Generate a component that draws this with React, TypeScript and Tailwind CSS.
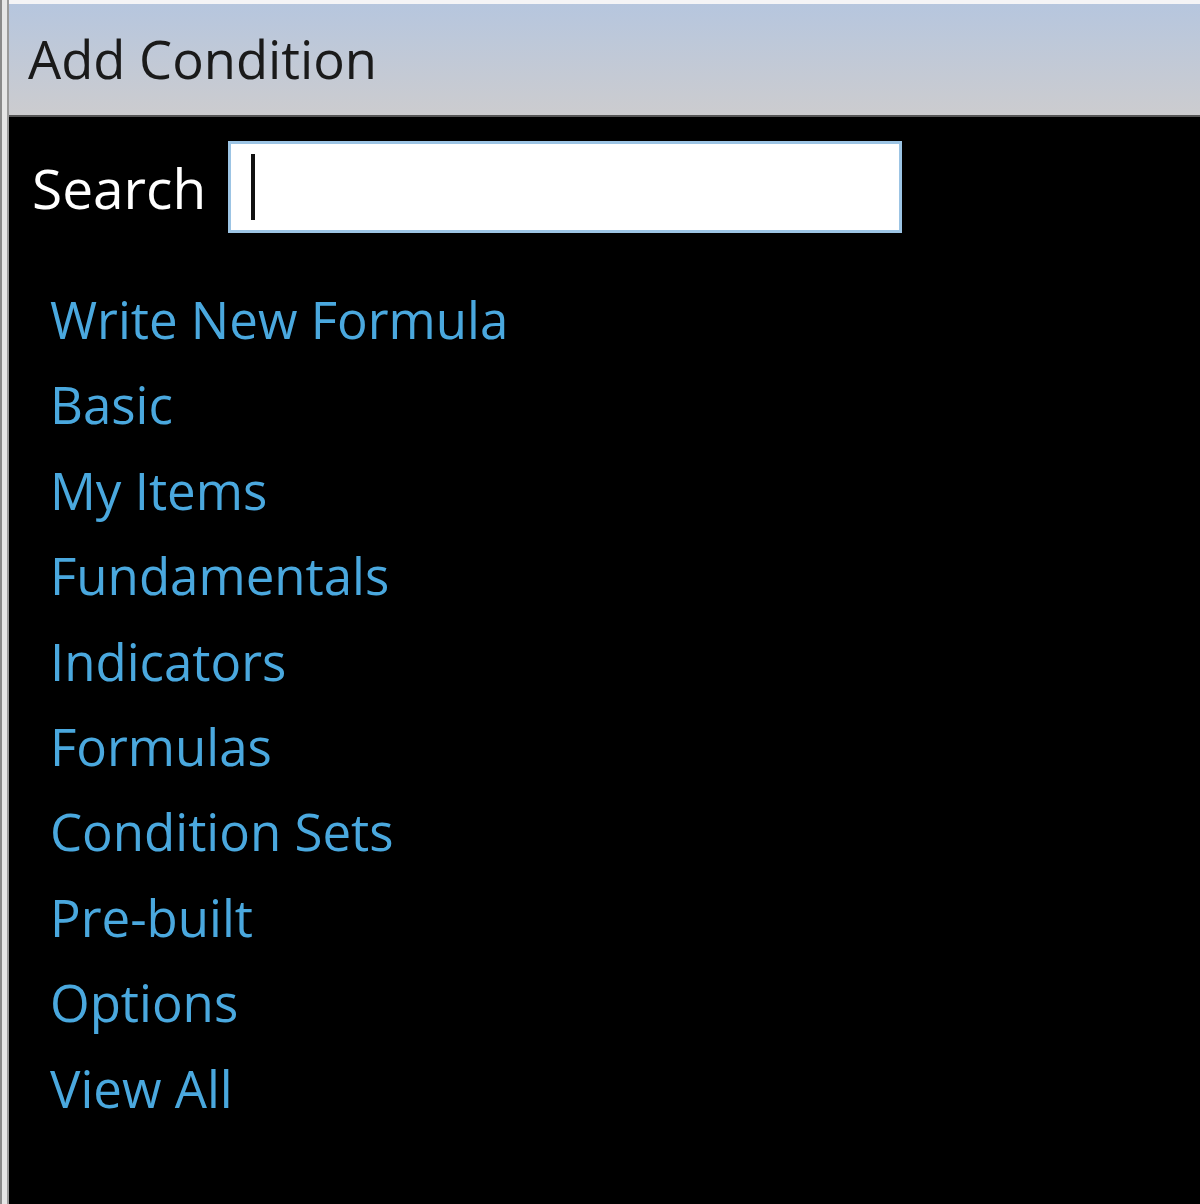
import React from "react";

const items = [
  "Write New Formula",
  "Basic",
  "My Items",
  "Fundamentals",
  "Indicators",
  "Formulas",
  "Condition Sets",
  "Pre-built",
  "Options",
  "View All",
];

export default function App() {
  return (
    <div className="flex h-[1204px] w-[1200px] overflow-hidden bg-black font-['Open_Sans',sans-serif]">
      <div className="flex w-[9px] shrink-0">
        <div className="w-[2px] bg-[#8a8a8a]" />
        <div className="w-[5px] bg-[#e6e6e6]" />
        <div className="w-[2px] bg-[#9a9a9a]" />
      </div>
      <div className="flex flex-1 flex-col">
        <div className="h-[4px] bg-[#f4f4f6]" />
        <div className="flex h-[111px] items-center bg-gradient-to-b from-[#b6c6de] to-[#cccccf] pl-[19px]">
          <span className="text-[52.5px] leading-none text-[#1a1a1a]">Add Condition</span>
        </div>
        <div className="h-[2px] bg-[#555]" />
        <div className="flex items-center pl-[23px] pt-[24px]">
          <span className="text-[55px] leading-none text-white">Search</span>
          <div className="ml-[22px] flex h-[92px] w-[674px] items-center border-[3px] border-[#9cc4e4] bg-white pl-[20px]">
            <div className="h-[66px] w-[4px] bg-[#111]" />
          </div>
        </div>
        <ul className="mt-[61px] flex flex-col pl-[41px]">
          {items.map((t) => (
            <li key={t} className="h-[85.4px] text-[51px] leading-none text-[#4aa8de]">
              {t}
            </li>
          ))}
        </ul>
      </div>
    </div>
  );
}
